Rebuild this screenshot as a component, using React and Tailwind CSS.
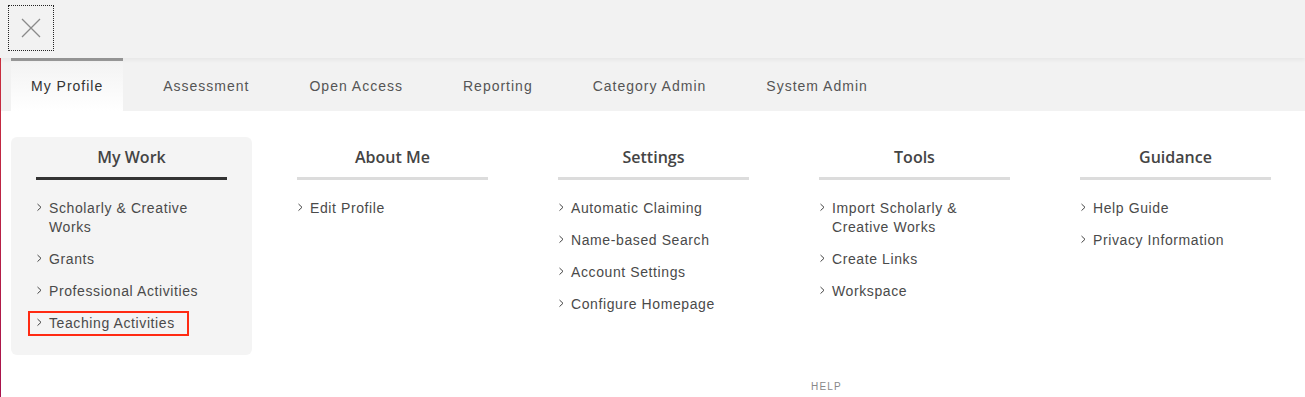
import React from "react";

const tabs = ["My Profile", "Assessment", "Open Access", "Reporting", "Category Admin", "System Admin"];

const columns = [
  {
    title: "My Work",
    active: true,
    items: [["Scholarly & Creative", "Works"], ["Grants"], ["Professional Activities"], ["Teaching Activities"]],
  },
  { title: "About Me", items: [["Edit Profile"]] },
  {
    title: "Settings",
    items: [["Automatic Claiming"], ["Name-based Search"], ["Account Settings"], ["Configure Homepage"]],
  },
  {
    title: "Tools",
    items: [["Import Scholarly &", "Creative Works"], ["Create Links"], ["Workspace"]],
  },
  { title: "Guidance", items: [["Help Guide"], ["Privacy Information"]] },
];

function Chevron() {
  return (
    <svg width="13" height="19" viewBox="0 0 13 19" className="shrink-0">
      <polyline points="1.5,5 5,8.3 1.5,11.6" fill="none" stroke="#444" strokeWidth="1" />
    </svg>
  );
}

function MenuItem({ lines, marked }) {
  return (
    <li className="relative flex text-[14px] leading-[19px] tracking-[0.6px] text-[#4a4a4a]">
      <Chevron />
      <span>
        {lines.map((l, i) => (
          <React.Fragment key={i}>
            {i > 0 && <br />}
            {l}
          </React.Fragment>
        ))}
      </span>
      {/* highlight annotation */}
      {marked && (
        <span className="absolute left-[-8px] top-[-3px] w-[161px] h-[25px] border-2 border-[#ff2a12]" />
      )}
    </li>
  );
}

export default function App() {
  return (
    <div
      className="relative min-h-screen bg-white"
      style={{ fontFamily: '"Liberation Sans", Arial, sans-serif' }}
    >
      <div className="absolute left-0 top-0 bottom-0 w-px bg-gradient-to-b from-[#d0323a] to-[#a8124c]" />

      {/* top bar */}
      <div className="relative z-10 h-[58px] bg-[#f2f2f2] pl-2 pt-[5px] shadow-[0_2px_4px_rgba(0,0,0,0.05)]">
        <button className="w-[46px] h-[46px] border border-dotted border-[#222] flex items-center justify-center">
          <svg width="20" height="20" viewBox="0 0 20 20">
            <path d="M1 1 L19 19 M19 1 L1 19" stroke="#8a8a8a" strokeWidth="1.3" />
          </svg>
        </button>
      </div>

      {/* tabs */}
      <nav className="h-[53px] bg-[#f2f2f2] flex pl-[11px] gap-5">
        {tabs.map((t, i) => (
          <div
            key={t}
            className={
              i === 0
                ? "px-5 flex items-center border-t-[3px] border-[#999] bg-gradient-to-b from-[#f3f3f3] to-white text-[14px] tracking-[1px] text-[#333]"
                : "px-5 flex items-center border-t-[3px] border-transparent text-[14px] tracking-[1px] text-[#555]"
            }
          >
            {t}
          </div>
        ))}
      </nav>

      {/* menu columns */}
      <div className="flex gap-5 pl-[11px] pt-[26px]">
        {columns.map((c) => (
          <div
            key={c.title}
            className={
              c.active
                ? "w-[241px] shrink-0 rounded-md bg-[#f4f4f4] px-[25px] pt-[9px] pb-[22px]"
                : "w-[241px] shrink-0 px-[25px] pt-[9px] pb-[22px]"
            }
          >
            <h2
              className="text-center text-[16px] leading-[22px] font-semibold text-[#444]"
              style={{ fontFamily: '"Open Sans", sans-serif' }}
            >
              {c.title}
            </h2>
            <div className={c.active ? "mt-[9px] h-[3px] bg-[#333]" : "mt-[9px] h-[3px] bg-[#dcdcdc]"} />
            <ul className="mt-[19px] flex flex-col gap-[13px]">
              {c.items.map((lines) => (
                <MenuItem key={lines.join(" ")} lines={lines} marked={lines[0] === "Teaching Activities"} />
              ))}
            </ul>
          </div>
        ))}
      </div>

      <div className="pl-[811px] pt-[24px] text-[10px] tracking-[1.2px] text-[#888]">HELP</div>
    </div>
  );
}
